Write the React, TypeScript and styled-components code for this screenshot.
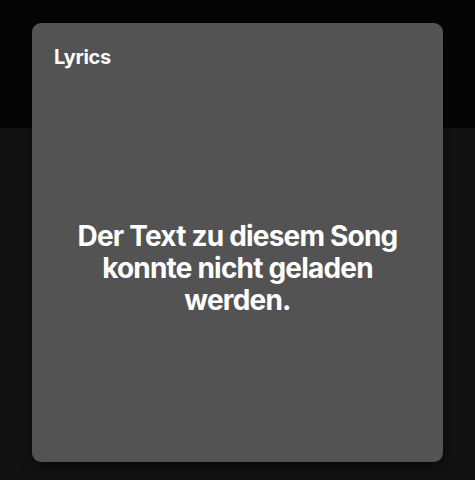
import React from "react";
import styled, { createGlobalStyle } from "styled-components";

const Global = createGlobalStyle`
  html, body { margin: 0; padding: 0; background: #121212; }
  body { font-family: Inter, "Noto Sans", Arial, sans-serif; -webkit-font-smoothing: antialiased; }
`;

const Page = styled.div`
  position: relative;
  width: 475px;
  height: 480px;
  display: flex;
  flex-direction: column;
  background: #121212;
  overflow: hidden;
`;

const TopBar = styled.div`
  height: 128px;
  background: #050505;
  flex-shrink: 0;
`;

const Rest = styled.div`
  flex: 1;
  background: #121212;
`;

const Modal = styled.div`
  position: absolute;
  top: 23px;
  left: 32px;
  width: 411px;
  height: 439px;
  background: #535353;
  border-radius: 9px;
  box-sizing: border-box;
  padding: 22px 22px 0 22px;
  display: flex;
  flex-direction: column;
  color: #ffffff;
  box-shadow: 0 4px 14px rgba(0, 0, 0, 0.5);
`;

const Title = styled.h2`
  margin: 0;
  font-size: 20px;
  font-weight: 700;
  line-height: 24px;
  letter-spacing: -0.3px;
`;

const Body = styled.div`
  flex: 1;
  display: flex;
  align-items: center;
  justify-content: center;
  padding-top: 4px;
`;

const Message = styled.p`
  margin: 0;
  font-size: 28px;
  font-weight: 700;
  line-height: 32px;
  letter-spacing: -0.8px;
  text-align: center;
  max-width: 340px;
`;

export default function App() {
  return (
    <>
      <Global />
      <Page>
        <TopBar />
        <Rest />
        <Modal>
          <Title>Lyrics</Title>
          <Body>
            <Message>Der Text zu diesem Song konnte nicht geladen werden.</Message>
          </Body>
        </Modal>
      </Page>
    </>
  );
}
